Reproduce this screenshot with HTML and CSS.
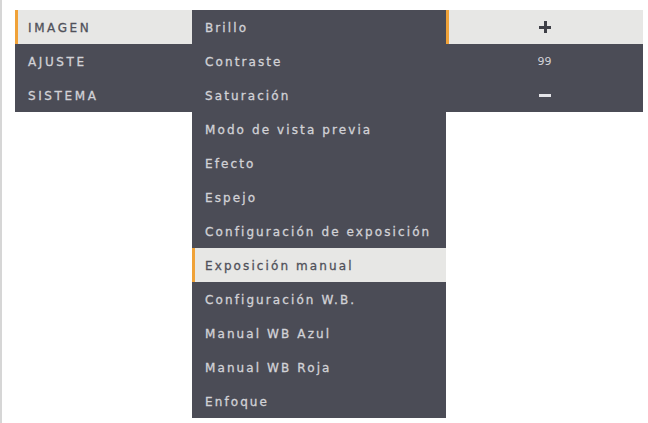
FILE: index.html
```html
<!DOCTYPE html>
<html lang="es">
<head>
<meta charset="utf-8">
<title>Menú</title>
<link rel="stylesheet" href="styles.css">
</head>
<body>
<div class="frame">
  <div class="menu">
    <ul class="col col-main">
      <li class="row active">IMAGEN</li>
      <li class="row">AJUSTE</li>
      <li class="row">SISTEMA</li>
    </ul>
    <ul class="col col-sub">
      <li class="row">Brillo</li>
      <li class="row">Contraste</li>
      <li class="row">Saturación</li>
      <li class="row">Modo de vista previa</li>
      <li class="row">Efecto</li>
      <li class="row">Espejo</li>
      <li class="row">Configuración de exposición</li>
      <li class="row active">Exposición manual</li>
      <li class="row">Configuración W.B.</li>
      <li class="row">Manual WB Azul</li>
      <li class="row">Manual WB Roja</li>
      <li class="row">Enfoque</li>
    </ul>
    <ul class="col col-value">
      <li class="row active center"><span class="plus" aria-label="+"></span></li>
      <li class="row center value">99</li>
      <li class="row center"><span class="minus" aria-label="−"></span></li>
    </ul>
  </div>
</div>
</body>
</html>
```
FILE: styles.css
```css
html, body {
  margin: 0;
  padding: 0;
  background: #ffffff;
}

.frame {
  width: 648px;
  height: 423px;
  box-sizing: border-box;
  border-left: 2px solid #d6d6d6;
  padding: 10px 0 0 13px;
  font-family: "DejaVu Sans", "Liberation Sans", sans-serif;
}

.menu {
  display: flex;
  align-items: flex-start;
}

.col {
  list-style: none;
  margin: 0;
  padding: 0;
  background: #4b4c56;
}

.col-main { width: 177px; }
.col-sub { width: 254px; }
.col-value { width: 197px; }

.row {
  height: 34px;
  display: flex;
  align-items: center;
  box-sizing: border-box;
  padding-top: 2px;
  color: #d2d2d6;
  font-size: 12px;
  font-weight: normal;
  letter-spacing: 2.1px;
  white-space: nowrap;
  -webkit-text-stroke: 0.3px currentColor;
}

.col-main .row {
  padding-left: 13px;
  letter-spacing: 2.6px;
}
.col-sub .row { padding-left: 13px; }

.row.active {
  background: #e7e7e5;
  color: #50515a;
  border-left: 3px solid #f0a238;
}

.col-main .row.active,
.col-sub .row.active { padding-left: 10px; }

.row.center {
  justify-content: center;
  padding-top: 0;
}

.col-value .row.active { padding-right: 3px; }

.value {
  font-size: 11px;
  letter-spacing: 0;
  -webkit-text-stroke: 0;
}

.plus {
  position: relative;
  display: block;
  width: 12px;
  height: 12px;
}
.plus::before,
.plus::after {
  content: "";
  position: absolute;
  background: #3e3f46;
}
.plus::before {
  left: 0;
  top: 5px;
  width: 12px;
  height: 3px;
}
.plus::after {
  left: 5px;
  top: 0;
  width: 3px;
  height: 12px;
}

.minus {
  display: block;
  width: 12px;
  height: 3px;
  background: #e4e4e8;
}
```
